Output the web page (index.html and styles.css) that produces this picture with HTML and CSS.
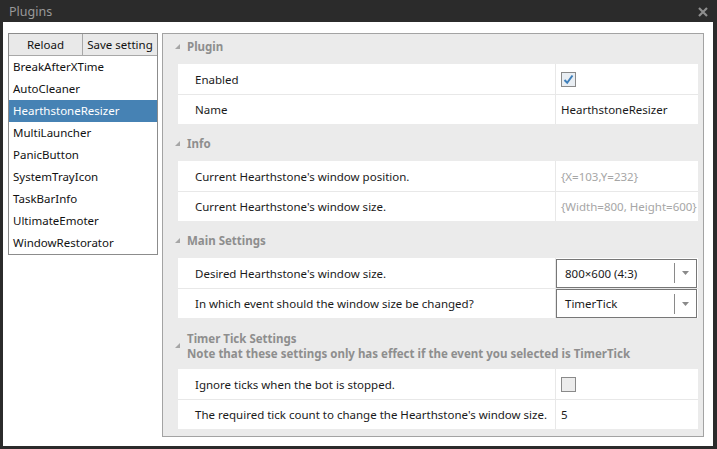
FILE: index.html
```html
<!DOCTYPE html>
<html>
<head>
<meta charset="utf-8">
<link rel="stylesheet" href="styles.css">
</head>
<body>
<div class="titlebar">
  <span class="title">Plugins</span>
  <svg class="close" width="10" height="10" viewBox="0 0 10 10"><path d="M1 1 L9 9 M9 1 L1 9" stroke="#8e8e8e" stroke-width="2.2"/></svg>
</div>
<div class="content">
  <div class="sidebar">
    <div class="buttons">
      <div class="btn btn-reload">Reload</div>
      <div class="btn btn-save">Save setting</div>
    </div>
    <ul class="list">
      <li>BreakAfterXTime</li>
      <li>AutoCleaner</li>
      <li class="selected">HearthstoneResizer</li>
      <li>MultiLauncher</li>
      <li>PanicButton</li>
      <li>SystemTrayIcon</li>
      <li>TaskBarInfo</li>
      <li>UltimateEmoter</li>
      <li>WindowRestorator</li>
    </ul>
  </div>
  <div class="grid">
    <section class="group first">
      <div class="group-header"><svg class="tri" width="6" height="6" viewBox="0 0 6 6"><polygon points="5,0 5,5 0,5" fill="#a6a6a6"/></svg><div class="gtitle">Plugin</div></div>
      <div class="rows">
        <div class="row"><div class="label">Enabled</div><div class="value"><span class="check checked"><svg width="13" height="13" viewBox="0 0 13 13"><path d="M2.5 7 L5.2 9.8 L10.5 2.5" fill="none" stroke="#3f7fba" stroke-width="2"/></svg></span></div></div>
        <div class="row"><div class="label">Name</div><div class="value">HearthstoneResizer</div></div>
      </div>
    </section>
    <section class="group">
      <div class="group-header"><svg class="tri" width="6" height="6" viewBox="0 0 6 6"><polygon points="5,0 5,5 0,5" fill="#a6a6a6"/></svg><div class="gtitle">Info</div></div>
      <div class="rows">
        <div class="row"><div class="label">Current Hearthstone's window position.</div><div class="value muted">{X=103,Y=232}</div></div>
        <div class="row"><div class="label">Current Hearthstone's window size.</div><div class="value muted">{Width=800, Height=600}</div></div>
      </div>
    </section>
    <section class="group">
      <div class="group-header"><svg class="tri" width="6" height="6" viewBox="0 0 6 6"><polygon points="5,0 5,5 0,5" fill="#a6a6a6"/></svg><div class="gtitle">Main Settings</div></div>
      <div class="rows">
        <div class="row"><div class="label">Desired Hearthstone's window size.</div><div class="value combo-cell"><div class="combo"><span class="combo-text">800×600 (4:3)</span><span class="combo-sep"></span><svg class="combo-arrow" width="7" height="4" viewBox="0 0 7 4"><polygon points="0,0 7,0 3.5,4" fill="#8a8a8a"/></svg></div></div></div>
        <div class="row"><div class="label">In which event should the window size be changed?</div><div class="value combo-cell"><div class="combo"><span class="combo-text">TimerTick</span><span class="combo-sep"></span><svg class="combo-arrow" width="7" height="4" viewBox="0 0 7 4"><polygon points="0,0 7,0 3.5,4" fill="#8a8a8a"/></svg></div></div></div>
      </div>
    </section>
    <section class="group">
      <div class="group-header two"><svg class="tri" width="6" height="6" viewBox="0 0 6 6"><polygon points="5,0 5,5 0,5" fill="#a6a6a6"/></svg><div class="gtitle">Timer Tick Settings<br>Note that these settings only has effect if the event you selected is TimerTick</div></div>
      <div class="rows">
        <div class="row"><div class="label">Ignore ticks when the bot is stopped.</div><div class="value"><span class="check"></span></div></div>
        <div class="row"><div class="label">The required tick count to change the Hearthstone's window size.</div><div class="value">5</div></div>
      </div>
    </section>
  </div>
</div>
</body>
</html>
```

FILE: styles.css
```css
* { box-sizing: border-box; }
html, body { margin: 0; padding: 0; }
body {
  width: 717px;
  height: 449px;
  background: #2b2b2b;
  font-family: "Noto Sans", "Open Sans", sans-serif;
  font-size: 11.5px;
  color: #1a1a1a;
  display: flex;
  flex-direction: column;
  overflow: hidden;
}
.titlebar {
  height: 22px;
  flex: none;
  display: flex;
  align-items: center;
  justify-content: space-between;
  padding: 0 9px 0 9px;
}
.title { color: #9a9a9a; font-size: 12.5px; }
.close { margin-top: 1px; }
.content {
  flex: none;
  height: 424px;
  margin: 0 4px 0 3px;
  background: #fff;
  padding: 11px 9px 9px 5px;
  display: flex;
  align-items: flex-start;
  gap: 4px;
}
.sidebar {
  width: 150px;
  border: 1px solid #8c8c8c;
  flex: none;
}
.buttons { display: flex; height: 22px; border-bottom: 1px solid #a8a8a8; }
.btn {
  background: #e9e9e9;
  display: flex;
  align-items: center;
  justify-content: center;
  color: #111;
  height: 21px;
}
.btn-reload { width: 74px; border-right: 1px solid #a8a8a8; }
.btn-save { flex: 1; }
.list { list-style: none; margin: 0; padding: 0; }
.list li {
  height: 22px;
  line-height: 22px;
  padding-left: 4px;
  color: #111;
}
.list li.selected { background: #4682b4; color: #fff; }
.grid {
  flex: 1;
  height: 404px;
  border: 1px solid #a3a3a3;
  background: #ebebeb;
  padding: 0 5px 0 12px;
}
.group { margin-top: 7px; }
.group.first { margin-top: 0; }
.group-header {
  display: flex;
  align-items: flex-start;
  padding: 5px 0 10px 0;
  color: #8e8e8e;
  font-weight: bold;
  line-height: 15px;
}
.group-header .tri { margin: 5px 6px 0 0; flex: none; }
.group-header.two { padding-top: 6px; padding-bottom: 8px; }
.group-header.two .tri { margin-top: 12px; }
.rows { background: #fff; margin-left: 3px; }
.row {
  display: flex;
  height: 30px;
  align-items: stretch;
}
.row + .row { border-top: 1px solid #e8e8e8; height: 30px; }
.label {
  width: 378px;
  flex: none;
  padding-left: 17px;
  display: flex;
  align-items: center;
  border-right: 1px solid #e8e8e8;
  white-space: nowrap;
}
.value {
  flex: 1;
  padding-left: 5px;
  display: flex;
  align-items: center;
  white-space: nowrap;
  overflow: hidden;
}
.value.muted { color: #a6a6a6; }
.check {
  width: 15px;
  height: 15px;
  border: 1px solid #8a8a8a;
  background: #ececec;
  display: inline-flex;
  align-items: center;
  justify-content: center;
}
.check.checked { background: #e9eef3; }
.combo-cell { padding: 0 1px 0 0; }
.combo {
  width: 100%;
  height: 29px;
  border: 1px solid #777;
  display: flex;
  align-items: center;
  padding-left: 8px;
  background: #fff;
}
.combo-text { flex: 1; }
.combo-sep { width: 1px; height: 20px; background: #8a8a8a; }
.combo-arrow { margin: 0 7px 0 7px; }
```
